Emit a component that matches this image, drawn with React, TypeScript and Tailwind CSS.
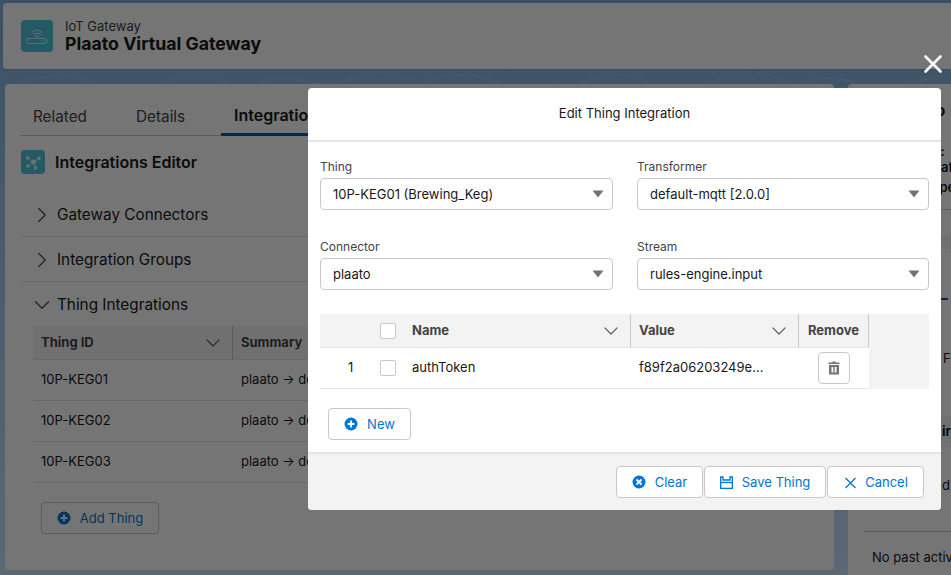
import { ChevronDown, ChevronRight } from 'lucide-react'

const font = { fontFamily: 'Inter, "Liberation Sans", sans-serif' }

function PlusIcon() {
  return (
    <svg width="14" height="14" viewBox="0 0 14 14" className="shrink-0">
      <circle cx="7" cy="7" r="6.5" fill="#0176d3" />
      <path d="M7 3.6v6.8M3.6 7h6.8" stroke="#fff" strokeWidth="1.8" />
    </svg>
  )
}

function Select({ label, value }: { label: string; value: string }) {
  return (
    <div>
      <div className="text-[12px] leading-[16px] text-[#444] pt-[1px] mb-[3px]">{label}</div>
      <div className="h-[32px] flex items-center justify-between border border-[#c9c9c9] rounded-[4px] pl-[12px] pr-[8px] text-[13px] text-[#181818]">
        <span className="pt-[1px]">{value}</span>
        <svg width="12" height="8" viewBox="0 0 12 8">
          <path d="M0.5 0.5h11L6 7.500z" fill="#747474" />
        </svg>
      </div>
    </div>
  )
}

function FooterButton({ w, icon, children }: { w: string; icon: React.ReactNode; children: string }) {
  return (
    <button className={`${w} h-[32px] flex items-center justify-center gap-[9px] bg-white border border-[#c9c9c9] rounded-[4px] text-[13px] text-[#0176d3]`}>
      {icon}
      <span className="pt-[1px]">{children}</span>
    </button>
  )
}

function HeaderChevron() {
  return <ChevronDown size={24} strokeWidth={1.3} color="#666" className="-m-[5px] shrink-0" />
}

function AccordionRow({ title, open }: { title: string; open?: boolean }) {
  const Icon = open ? ChevronDown : ChevronRight
  return (
    <div className={`flex items-center gap-[8px] pl-[13px] pt-[2px] text-[15.3px] text-[#181818] ${open ? 'h-[44px]' : 'h-[45px] border-b border-[#e5e5e5]'}`}>
      <Icon size={26} strokeWidth={1.3} color="#555" className="-m-[5.5px] shrink-0" />
      {title}
    </div>
  )
}

function ThingRow({ id }: { id: string }) {
  return (
    <div className="h-[41px] flex items-center border-b border-[#e5e5e5] text-[13px] text-[#181818]">
      <div className="w-[200px] pl-[8px]">{id}</div>
      <div className="ml-[8px] whitespace-nowrap">plaato → de</div>
    </div>
  )
}

export default function App() {
  return (
    <div style={font} className="relative w-[951px] h-[575px] overflow-hidden bg-gradient-to-b from-[#82b2e4] to-[#c6e2ff]">
      <svg width="951" height="30" viewBox="0 0 951 30" fill="none" stroke="#ffffff" strokeOpacity="0.16" className="absolute left-0 top-[62px]">
        <path d="M20 22c30-14 60-10 80 2s50 6 70-6 40-8 60 6M260 20c30-12 50 8 80 0s40-14 70-2M420 24c20-16 60-14 80-2s40 4 60-4M580 22c20-10 50-14 70 0s50 6 70-6 50-6 70 6M800 24c20-12 40-10 60 0s40 0 70-8" />
      </svg>

      {/* record header */}
      <div className="relative pl-[3px] pt-[3px]">
        <div className="h-[66px] w-[960px] bg-white rounded-[4px] flex items-center pl-[18px] gap-[12px] shadow-sm">
          <div className="w-[32px] h-[32px] rounded-[4px] bg-[#4fc3dc] flex items-center justify-center">
            <svg width="24" height="24" viewBox="0 0 24 24" fill="none" stroke="#fff" strokeOpacity="0.75" strokeWidth="1.1" strokeLinecap="round">
              <rect x="2" y="14.5" width="20" height="5" rx="2.2" />
              <path d="M16.5 17h.1M18.3 17h.1M20 17h.1" strokeWidth="1.2" />
              <path d="M7 8.2c3-2.4 7-2.4 10 0M8.7 10.5c2-1.5 4.6-1.5 6.600 0M10.4 12.6c1-.6 2.2-.6 3.2 0" />
            </svg>
          </div>
          <div className="pt-[1px]">
            <div className="text-[13px] leading-[15px] text-[#444]">IoT Gateway</div>
            <div className="text-[17.700px] leading-[20px] font-bold text-[#181818]">Plaato Virtual Gateway</div>
          </div>
        </div>
      </div>

      <div className="relative flex items-start pl-[5px] pt-[15px] gap-[14px]">
        {/* main card */}
        <div className="w-[829px] h-[486px] shrink-0 bg-white rounded-[4px] px-[16px]">
          <div className="h-[52px] flex items-end border-b border-[#c9c9c9] text-[15.300px] text-[#444]">
            <div className="w-[103px] pl-[12px] pb-[6px]">Related</div>
            <div className="w-[97px] pl-[12px] pb-[6px]">Details</div>
            <div className="pl-[13px] pr-[12px] pb-[6px] text-[16px] font-semibold text-[#181818] border-b-[3px] border-[#0b5cab] -mb-px whitespace-nowrap">
              Integrations
            </div>
          </div>

          <div className="flex items-center gap-[10px] mt-[14px] mb-[18px] text-[16px] font-semibold text-[#181818]">
            <div className="w-[24px] h-[24px] rounded-[4px] bg-[#4fc3dc] flex items-center justify-center">
              <svg width="18" height="18" viewBox="0 0 18 18" fill="#fff" fillOpacity="0.75" stroke="#fff" strokeOpacity="0.75" strokeWidth="1">
                <circle cx="9.5" cy="9" r="2" />
                <circle cx="3.5" cy="5" r="1.4" />
                <circle cx="15" cy="5.5" r="1.4" />
                <circle cx="4" cy="13" r="1.4" />
                <circle cx="11.5" cy="15" r="1.4" />
                <path d="M3.5 5l6 4 5.500-3.500M4 13l5.500-4 2 6" fill="none" />
              </svg>
            </div>
            Integrations Editor
          </div>

          <AccordionRow title="Gateway Connectors" />
          <AccordionRow title="Integration Groups" />
          <AccordionRow title="Thing Integrations" open />

          <div className="ml-[12px]">
            <div className="h-[34px] flex items-center bg-[#f3f3f3] border-b border-[#e5e5e5] text-[13px] font-bold text-[#444]">
              <div className="w-[200px] h-full flex items-center justify-between pl-[8px] pr-[12px] border-r border-[#c9c9c9]">
                Thing ID
                <HeaderChevron />
              </div>
              <div className="pl-[8px]">Summary</div>
            </div>
            <ThingRow id="10P-KEG01" />
            <ThingRow id="10P-KEG02" />
            <ThingRow id="10P-KEG03" />
            <button className="ml-[8px] mt-[19px] w-[118px] h-[32px] flex items-center justify-center gap-[9px] border border-[#c9c9c9] rounded-[4px] text-[13px] text-[#0176d3]">
              <PlusIcon />
              <span className="pt-[1px]">Add Thing</span>
            </button>
          </div>
        </div>

        {/* activity card, mostly behind the dialog */}
        <div className="w-[200px] h-[520px] shrink-0 bg-white rounded-[4px] pl-[24px] text-[13px] text-[#181818] whitespace-nowrap">
          <div className="pl-[43px] pt-[16px] text-[16px] leading-[20px] font-bold">Info</div>
          <div className="pl-[20px] pt-[23px] leading-[16px] font-semibold">Activity:</div>
          <div className="pl-[56px] leading-[16px] font-semibold">Status</div>
          <div className="pl-[52px] pt-[4px] leading-[16px] font-semibold">Type</div>
          <div className="border-b border-[#c9c9c9] h-[15px]" />
          <div className="mt-[25px] h-[14px] bg-[#f3f3f3] -ml-[24px]" />
          <div className="mt-[49px] h-[2px] w-[76px] bg-[#0b5cab]" />
          <div className="pl-[71px] pt-[50px] leading-[16px]">F</div>
          <div className="mt-[50px] h-[31px] bg-[#f3f3f3] -ml-[24px] pl-[94px] flex items-center font-bold">ir</div>
          <div className="pl-[70px] pt-[30px] leading-[16px]">d</div>
          <div className="mt-[38px] -ml-[8px] border-b border-[#c9c9c9]" />
          <div className="pt-[17px] leading-[16px]">No past activity</div>
        </div>
      </div>

      {/* backdrop */}
      <div className="absolute inset-0 bg-black/[0.54]" />

      <svg width="18" height="18" viewBox="0 0 18 18" className="absolute left-[924px] top-[55px]">
        <path d="M1.500 1.500l15 15M16.500 1.500l-15 15" stroke="#fff" strokeWidth="2.600" strokeLinecap="round" />
      </svg>

      {/* dialog */}
      <div className="absolute left-[308px] top-[88px] w-[633px] h-[422px] bg-white rounded-[4px] flex flex-col overflow-hidden">
        <div className="h-[54px] shrink-0 flex items-center justify-center border-b-2 border-[#e5e5e5] text-[13px] text-[#181818]">
          Edit Thing Integration
        </div>
        <div className="flex-1 pt-[16px]">
          <div className="grid grid-cols-[293px_292px] gap-x-[24px] gap-y-[28px] pl-[12px]">
            <Select label="Thing" value="10P-KEG01 (Brewing_Keg)" />
            <Select label="Transformer" value="default-mqtt [2.0.0]" />
            <Select label="Connector" value="plaato" />
            <Select label="Stream" value="rules-engine.input" />
          </div>

          <div className="ml-[12px] mt-[24px] w-[609px] bg-[#f3f3f3]">
            <div className="w-[549px]">
              <div className="h-[34px] flex items-center border-b border-[#e5e5e5] text-[13px] font-bold text-[#444]">
                <div className="w-[60px]" />
                <div className="w-[16px] h-[16px] bg-white border border-[#c9c9c9] rounded-[2px] shrink-0" />
                <div className="w-[235px] h-full flex items-center justify-between pl-[16px] pr-[12px] border-r border-[#c9c9c9]">
                  Name
                  <HeaderChevron />
                </div>
                <div className="w-[168px] h-full flex items-center justify-between pl-[8px] pr-[12px] border-r border-[#c9c9c9]">
                  Value
                  <HeaderChevron />
                </div>
                <div className="w-[70px] h-full flex items-center justify-center border-r border-[#c9c9c9]">Remove</div>
              </div>
              <div className="h-[41px] flex items-center bg-white border-b border-[#e5e5e5] text-[13px] text-[#181818]">
                <div className="w-[60px] pl-[28px]">1</div>
                <div className="w-[16px] h-[16px] bg-white border border-[#c9c9c9] rounded-[2px] shrink-0" />
                <div className="w-[235px] pl-[16px]">authToken</div>
                <div className="w-[168px] pl-[8px]">f89f2a06203249e…</div>
                <div className="w-[70px] flex justify-center">
                  <div className="w-[32px] h-[32px] flex items-center justify-center border border-[#c9c9c9] rounded-[4px]">
                    <svg width="14" height="14" viewBox="0 0 14 14">
                      <path d="M5.500 0.500h3v1h4v1.500h-11v-1.500h4zM2 4h10v9.500h-10zM4.500 6v5.500h1.800v-5.500zM7.700 6v5.500h1.800v-5.500z" fill="#747474" fillRule="evenodd" />
                    </svg>
                  </div>
                </div>
              </div>
            </div>
          </div>

          <button className="ml-[20px] mt-[19px] w-[83px] h-[32px] flex items-center justify-center gap-[9px] border border-[#c9c9c9] rounded-[4px] text-[13px] text-[#0176d3]">
            <PlusIcon />
            <span className="pt-[1px]">New</span>
          </button>
        </div>

        <div className="h-[58px] shrink-0 flex items-center justify-end gap-px pr-[17px] bg-[#f3f3f3] border-t-2 border-[#e5e5e5]">
          <FooterButton
            w="w-[87px]"
            icon={
              <svg width="14" height="14" viewBox="0 0 14 14">
                <circle cx="7" cy="7" r="6.500" fill="#0176d3" />
                <path d="M4.500 4.500l5 5M9.500 4.500l-5 5" stroke="#fff" strokeWidth="1.800" />
              </svg>
            }
          >
            Clear
          </FooterButton>
          <FooterButton
            w="w-[122px]"
            icon={
              <svg width="13" height="13" viewBox="0 0 13 13" fill="none" stroke="#0176d3" strokeWidth="1.300">
                <path d="M0.700 1h2.300v3h7v-3h2.300v11.300h-11.600z" />
                <path d="M0.700 6.500h11.600" />
              </svg>
            }
          >
            Save Thing
          </FooterButton>
          <FooterButton
            w="w-[97px]"
            icon={
              <svg width="13" height="13" viewBox="0 0 13 13">
                <path d="M2.500 2l10 10M12.500 2l-10 10" stroke="#0176d3" strokeWidth="1.300" />
              </svg>
            }
          >
            Cancel
          </FooterButton>
        </div>
      </div>
    </div>
  )
}
